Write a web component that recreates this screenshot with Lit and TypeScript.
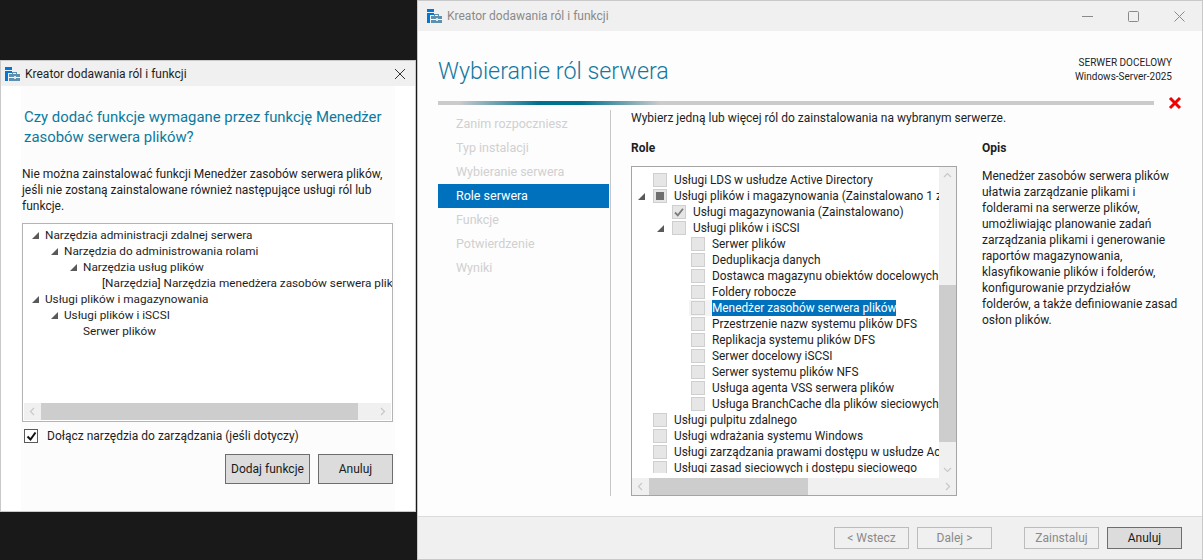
import { LitElement, html, css, svg } from "lit";
import { customElement, property } from "lit/decorators.js";

const appIcon = html`<svg class="app-icon" width="15" height="14" viewBox="0 0 15 14">
  <rect x="0" y="0" width="7" height="3" fill="#0078d7" />
  <rect x="0" y="4" width="7" height="2" fill="#0078d7" />
  <rect x="0" y="6" width="3" height="8" fill="#0078d7" />
  <path d="M4 7h11v7H4z" fill="#5d8fae" />
  <path d="M7 7V5h5v2h-1V6H8v1z" fill="#5d8fae" />
  <rect x="4" y="10" width="11" height="1" fill="#fff" />
  <rect x="9" y="9" width="2" height="3" fill="#dbe7ef" />
</svg>`;

const arrow = svg`<polygon points="7,0 7,7 0,7" fill="#5a5a5a" />`;

interface TreeRow {
  depth: number;
  label: string;
  open?: boolean;
  state?: "off" | "mixed" | "done";
  selected?: boolean;
}

const requiredRows: TreeRow[] = [
  { depth: 0, label: "Narzędzia administracji zdalnej serwera", open: true },
  { depth: 1, label: "Narzędzia do administrowania rolami", open: true },
  { depth: 2, label: "Narzędzia usług plików", open: true },
  { depth: 3, label: "[Narzędzia] Narzędzia menedżera zasobów serwera plików" },
  { depth: 0, label: "Usługi plików i magazynowania", open: true },
  { depth: 1, label: "Usługi plików i iSCSI", open: true },
  { depth: 2, label: "Serwer plików" },
];

const roleRows: TreeRow[] = [
  { depth: 0, label: "Usługi LDS w usłudze Active Directory" },
  { depth: 0, label: "Usługi plików i magazynowania (Zainstalowano 1 z 12)", open: true, state: "mixed" },
  { depth: 1, label: "Usługi magazynowania (Zainstalowano)", state: "done" },
  { depth: 1, label: "Usługi plików i iSCSI", open: true },
  { depth: 2, label: "Serwer plików" },
  { depth: 2, label: "Deduplikacja danych" },
  { depth: 2, label: "Dostawca magazynu obiektów docelowych iSCSI" },
  { depth: 2, label: "Foldery robocze" },
  { depth: 2, label: "Menedżer zasobów serwera plików", selected: true },
  { depth: 2, label: "Przestrzenie nazw systemu plików DFS" },
  { depth: 2, label: "Replikacja systemu plików DFS" },
  { depth: 2, label: "Serwer docelowy iSCSI" },
  { depth: 2, label: "Serwer systemu plików NFS" },
  { depth: 2, label: "Usługa agenta VSS serwera plików" },
  { depth: 2, label: "Usługa BranchCache dla plików sieciowych" },
  { depth: 0, label: "Usługi pulpitu zdalnego" },
  { depth: 0, label: "Usługi wdrażania systemu Windows" },
  { depth: 0, label: "Usługi zarządzania prawami dostępu w usłudze Active Directory" },
  { depth: 0, label: "Usługi zasad sieciowych i dostępu sieciowego" },
];

const steps = [
  "Zanim rozpoczniesz",
  "Typ instalacji",
  "Wybieranie serwera",
  "Role serwera",
  "Funkcje",
  "Potwierdzenie",
  "Wyniki",
];

const scrollbarStyles = css`
  .hbar {
    display: flex;
    flex: none;
    height: 17px;
    background: #f0f0f0;
    align-items: stretch;
  }
  .hbar .end {
    flex: none;
    width: 17px;
    display: flex;
    align-items: center;
    justify-content: center;
  }
  .hbar .thumb {
    background: #cdcdcd;
  }
  .hbar .track {
    flex: 1;
  }
`;

const chevron = (d: string) =>
  html`<svg width="9" height="9" viewBox="0 0 9 9"><path d=${d} fill="none" stroke="#c8c8c8" stroke-width="1.2" /></svg>`;

@customElement("wizard-button")
export class WizardButton extends LitElement {
  @property() label = "";
  @property({ type: Boolean }) disabled = false;

  render() {
    return html`<div class="btn ${this.disabled ? "off" : ""}">${this.label}</div>`;
  }

  static styles = css`
    :host {
      display: block;
    }
    .btn {
      box-sizing: border-box;
      width: 100%;
      height: 100%;
      display: flex;
      align-items: center;
      justify-content: center;
      background: #dcdcdc;
      border: 1px solid #6e6e6e;
      color: #1a1a1a;
      white-space: nowrap;
    }
    .btn.off {
      background: #f0f0f0;
      border-color: #bcbcbc;
      color: #8a8a8a;
    }
  `;
}

@customElement("app-root")
export class AppRoot extends LitElement {
  private _requiredRow(row: TreeRow) {
    return html`
      <div class="t-row" style="padding-left:${row.depth * 19}px">
        <span class="arrow">${row.open ? html`<svg width="7" height="7">${arrow}</svg>` : ""}</span>
        <span>${row.label}</span>
      </div>
    `;
  }

  private _roleRow(row: TreeRow) {
    return html`
      <div class="r-row" style="padding-left:${row.depth * 19}px">
        <span class="arrow r-arrow">${row.open ? html`<svg width="7" height="7">${arrow}</svg>` : ""}</span>
        <span class="cb-wrap ${row.selected ? "focus" : ""}">
          <span class="cb">
            ${row.state === "mixed" ? html`<span class="mixed"></span>` : ""}
            ${row.state === "done"
              ? html`<svg width="12" height="12" viewBox="0 0 12 12"><path d="M2 6.5l2.8 2.8L10 2.8" fill="none" stroke="#7c7c7c" stroke-width="1.8" /></svg>`
              : ""}
          </span>
        </span>
        <span class="r-label ${row.selected ? "sel" : ""}">${row.label}</span>
      </div>
    `;
  }

  render() {
    return html`
      <section class="dialog">
        <header class="titlebar">
          ${appIcon}
          <span class="title">Kreator dodawania ról i funkcji</span>
          <svg class="close" width="12" height="12" viewBox="0 0 12 12"><path d="M1 1l10 10M11 1L1 11" stroke="#333" stroke-width="1" fill="none" /></svg>
        </header>
        <div class="d-body">
          <h2>Czy dodać funkcje wymagane przez funkcję Menedżer zasobów serwera plików?</h2>
          <p>Nie można zainstalować funkcji Menedżer zasobów serwera plików, jeśli nie zostaną zainstalowane również następujące usługi ról lub funkcje.</p>
          <div class="t-box">
            <div class="t-view">${requiredRows.map((r) => this._requiredRow(r))}</div>
            <div class="hbar">
              <span class="end">${chevron("M6 1L2.5 4.5 6 8")}</span>
              <span class="thumb" style="width:317px"></span>
              <span class="track"></span>
              <span class="end">${chevron("M3 1l3.5 3.5L3 8")}</span>
            </div>
          </div>
          <label class="check">
            <span class="check-box">
              <svg width="11" height="11" viewBox="0 0 11 11"><path d="M1.5 5.5l3 3L9.5 1.5" fill="none" stroke="#111" stroke-width="2" /></svg>
            </span>
            Dołącz narzędzia do zarządzania (jeśli dotyczy)
          </label>
          <div class="d-actions">
            <wizard-button class="add" label="Dodaj funkcje"></wizard-button>
            <wizard-button class="cancel" label="Anuluj"></wizard-button>
          </div>
        </div>
      </section>

      <section class="wizard">
        <header class="titlebar main">
          ${appIcon}
          <span class="title">Kreator dodawania ról i funkcji</span>
          <span class="win-ctl">
            <svg width="11" height="11" viewBox="0 0 11 11"><path d="M0 5.5h11" stroke="#8a8a8a" fill="none" /></svg>
            <svg width="11" height="11" viewBox="0 0 11 11"><rect x=".5" y=".5" width="10" height="10" rx="1" stroke="#8a8a8a" fill="none" /></svg>
            <svg width="11" height="11" viewBox="0 0 11 11"><path d="M.5.5l10 10M10.5.5l-10 10" stroke="#8a8a8a" fill="none" /></svg>
          </span>
        </header>

        <div class="w-head">
          <h1>Wybieranie ról serwera</h1>
          <div class="target">SERWER DOCELOWY<br />Windows-Server-2025</div>
        </div>

        <div class="progress-row">
          <div class="progress"></div>
          <svg class="err" width="14" height="14" viewBox="0 0 14 14"><path d="M2 2l10 10M12 2L2 12" stroke="#f00000" stroke-width="3" fill="none" /></svg>
        </div>

        <div class="w-main">
          <nav class="steps">
            ${steps.map((s, i) => html`<div class="step ${i === 3 ? "on" : ""}">${s}</div>`)}
          </nav>
          <div class="content">
            <div class="intro">Wybierz jedną lub więcej ról do zainstalowania na wybranym serwerze.</div>
            <div class="columns">
              <div class="roles">
                <div class="col-head">Role</div>
                <div class="r-box">
                  <div class="r-top">
                    <div class="r-view">
                      <div class="r-clip">${roleRows.map((r) => this._roleRow(r))}</div>
                    </div>
                    <div class="vbar">
                      <span class="v-end">${chevron("M1 6l3.5-3.5L8 6")}</span>
                      <span class="v-gap a"></span>
                      <span class="v-thumb"></span>
                      <span class="v-gap"></span>
                      <span class="v-end">${chevron("M1 3l3.5 3.5L8 3")}</span>
                    </div>
                  </div>
                  <div class="hbar">
                    <span class="end">${chevron("M6 1L2.5 4.5 6 8")}</span>
                    <span class="thumb" style="width:159px"></span>
                    <span class="track"></span>
                    <span class="end">${chevron("M3 1l3.5 3.5L3 8")}</span>
                  </div>
                </div>
              </div>
              <div class="desc">
                <div class="col-head">Opis</div>
                <p>Menedżer zasobów serwera plików ułatwia zarządzanie plikami i folderami na serwerze plików, umożliwiając planowanie zadań zarządzania plikami i generowanie raportów magazynowania, klasyfikowanie plików i folderów, konfigurowanie przydziałów folderów, a także definiowanie zasad osłon plików.</p>
              </div>
            </div>
          </div>
        </div>

        <footer class="w-foot">
          <wizard-button disabled label="< Wstecz"></wizard-button>
          <wizard-button disabled label="Dalej >"></wizard-button>
          <wizard-button class="gap" disabled label="Zainstaluj"></wizard-button>
          <wizard-button label="Anuluj"></wizard-button>
        </footer>
      </section>
    `;
  }

  static styles = [
    scrollbarStyles,
    css`
      :host {
        display: block;
        position: relative;
        width: 1203px;
        height: 560px;
        overflow: hidden;
        background: #191919;
        font-family: Roboto, "Noto Sans", sans-serif;
        font-size: 12px;
        color: #1e1e1e;
      }
      .dialog,
      .wizard {
        position: absolute;
        box-sizing: border-box;
        display: flex;
        flex-direction: column;
        background: #fff;
      }
      .dialog {
        left: 0;
        top: 60px;
        width: 416px;
        height: 452px;
        border: 1px solid #c9c9c9;
      }
      .wizard {
        left: 417px;
        top: 0;
        width: 786px;
        height: 560px;
        border: 1px solid #c9c9c9;
        background: #fdfdfd;
      }
      .titlebar {
        flex: none;
        height: 25px;
        display: flex;
        align-items: center;
        background: #f0f0f0;
        padding-left: 4px;
      }
      .app-icon {
        flex: none;
        margin-right: 5px;
      }
      .close {
        margin-left: auto;
        margin-right: 9px;
      }
      .titlebar.main {
        height: 30px;
        padding-left: 9px;
      }
      .titlebar.main .title {
        color: #8a8a8a;
      }
      .win-ctl {
        margin-left: auto;
        display: flex;
        gap: 35px;
        margin-right: 17px;
      }

      /* dialog */
      .d-body {
        flex: 1;
        margin: 0 20px 0 20px;
        padding: 0 2px 0 1px;
        background: #fcfcfc;
        display: flex;
        flex-direction: column;
        height: 0;
      }
      h2 {
        margin: 21px 0 0 2px;
        font-size: 14.9px;
        font-weight: 400;
        line-height: 20px;
        color: #0b7a9e;
      }
      .d-body p {
        margin: 19px 0 0;
        line-height: 16px;
      }
      .t-box {
        box-sizing: border-box;
        margin-top: 9px;
        height: 199px;
        width: 371px;
        border: 1px solid #b4b4b4;
        background: #fff;
        display: flex;
        flex-direction: column;
      }
      .t-view {
        flex: 1;
        min-height: 0;
        overflow: hidden;
        padding: 3px 0 0 3px;
      }
      .t-row {
        display: flex;
        height: 16px;
        align-items: center;
        white-space: nowrap;
        font-size: 11.75px;
      }
      .arrow {
        flex: none;
        display: flex;
        width: 19px;
        padding-left: 6px;
        box-sizing: border-box;
      }
      .t-box .hbar {
        margin: 0 1px 1px;
      }
      .check {
        display: flex;
        align-items: center;
        margin: 7px 0 0 2px;
        gap: 9px;
      }
      .check-box {
        box-sizing: border-box;
        width: 14px;
        height: 14px;
        border: 1px solid #5a5a5a;
        background: #fff;
        display: flex;
        align-items: center;
        justify-content: center;
      }
      .d-actions {
        display: flex;
        justify-content: flex-end;
        gap: 8px;
        margin-top: 11px;
        width: 371px;
      }
      .d-actions .add {
        width: 85px;
        height: 30px;
      }
      .d-actions .cancel {
        width: 75px;
        height: 30px;
      }

      /* wizard */
      .w-head {
        flex: none;
        height: 69px;
        padding: 0 30px 0 20px;
        display: flex;
        justify-content: space-between;
      }
      h1 {
        margin: 24px 0 0;
        font-size: 23.3px;
        font-weight: 300;
        line-height: 32px;
        color: #13789f;
      }
      .target {
        margin-top: 25px;
        text-align: right;
        font-size: 10px;
        line-height: 14px;
      }
      .progress-row {
        flex: none;
        height: 5px;
        display: flex;
        align-items: center;
        padding-left: 20px;
      }
      .progress {
        width: 716px;
        height: 4px;
        background: linear-gradient(
          90deg,
          #cbcbcb 0,
          #cbcbcb 3%,
          #00708f 14%,
          #00708f 20%,
          #cbcbcb 31%,
          #cbcbcb 100%
        );
      }
      .err {
        margin-left: 14px;
      }
      .w-main {
        flex: 1;
        min-height: 0;
        display: flex;
        padding: 5px 0 20px 20px;
      }
      .steps {
        flex: none;
        width: 172px;
        padding-top: 2px;
      }
      .step {
        height: 24px;
        line-height: 24px;
        padding-left: 18px;
        color: #d0d0d0;
        font-size: 12.5px;
      }
      .step.on {
        background: #0071bc;
        color: #fff;
        margin-right: 1px;
      }
      .content {
        flex: 1;
        min-width: 0;
        border-left: 1px solid #c6c6c6;
        padding-left: 20px;
      }
      .intro {
        line-height: 16px;
      }
      .columns {
        display: flex;
        gap: 25px;
        margin-top: 14px;
      }
      .col-head {
        font-weight: 700;
        line-height: 16px;
      }
      .r-box {
        box-sizing: border-box;
        margin-top: 10px;
        width: 326px;
        height: 330px;
        border: 1px solid #a5a5a5;
        display: flex;
        flex-direction: column;
        background: #fff;
      }
      .r-top {
        flex: 1;
        min-height: 0;
        display: flex;
      }
      .r-view {
        flex: 1;
        min-width: 0;
        box-sizing: border-box;
        padding: 5px 0 5px 4px;
        display: flex;
      }
      .r-clip {
        flex: 1;
        min-width: 0;
        overflow: hidden;
      }
      .r-row {
        display: flex;
        height: 16px;
        align-items: center;
        white-space: nowrap;
        font-size: 11.85px;
      }
      .r-arrow {
        width: 17px;
        padding-left: 2px;
      }
      .cb-wrap {
        flex: none;
        display: flex;
        align-items: center;
        width: 21px;
        height: 16px;
      }
      .cb-wrap.focus {
        background: #f4f4f4;
        margin-left: -2px;
        padding-left: 2px;
      }
      .cb {
        box-sizing: border-box;
        width: 14px;
        height: 14px;
        background: #e6e6e6;
        border: 1px solid #cfcfcf;
        display: flex;
        align-items: center;
        justify-content: center;
      }
      .mixed {
        width: 8px;
        height: 8px;
        background: #6f6f6f;
      }
      .r-label.sel {
        background: #0071bc;
        color: #fff;
        line-height: 16px;
      }
      .vbar {
        flex: none;
        width: 17px;
        display: flex;
        flex-direction: column;
        background: #f0f0f0;
      }
      .v-end {
        flex: none;
        height: 17px;
        display: flex;
        align-items: center;
        justify-content: center;
      }
      .v-gap {
        flex: 1;
      }
      .v-gap.a {
        flex: none;
        height: 101px;
      }
      .v-thumb {
        flex: none;
        height: 157px;
        background: #cdcdcd;
      }
      .desc {
        width: 196px;
      }
      .desc p {
        margin: 12px 0 0;
        line-height: 16px;
      }
      .w-foot {
        flex: none;
        height: 43px;
        box-sizing: border-box;
        border-top: 1px solid #dcdcdc;
        background: #f0f0f0;
        display: flex;
        justify-content: flex-end;
        align-items: center;
        gap: 8px;
        padding-right: 20px;
      }
      .w-foot wizard-button {
        width: 75px;
        height: 22px;
      }
      .w-foot .gap {
        margin-left: 24px;
      }
    `,
  ];
}
